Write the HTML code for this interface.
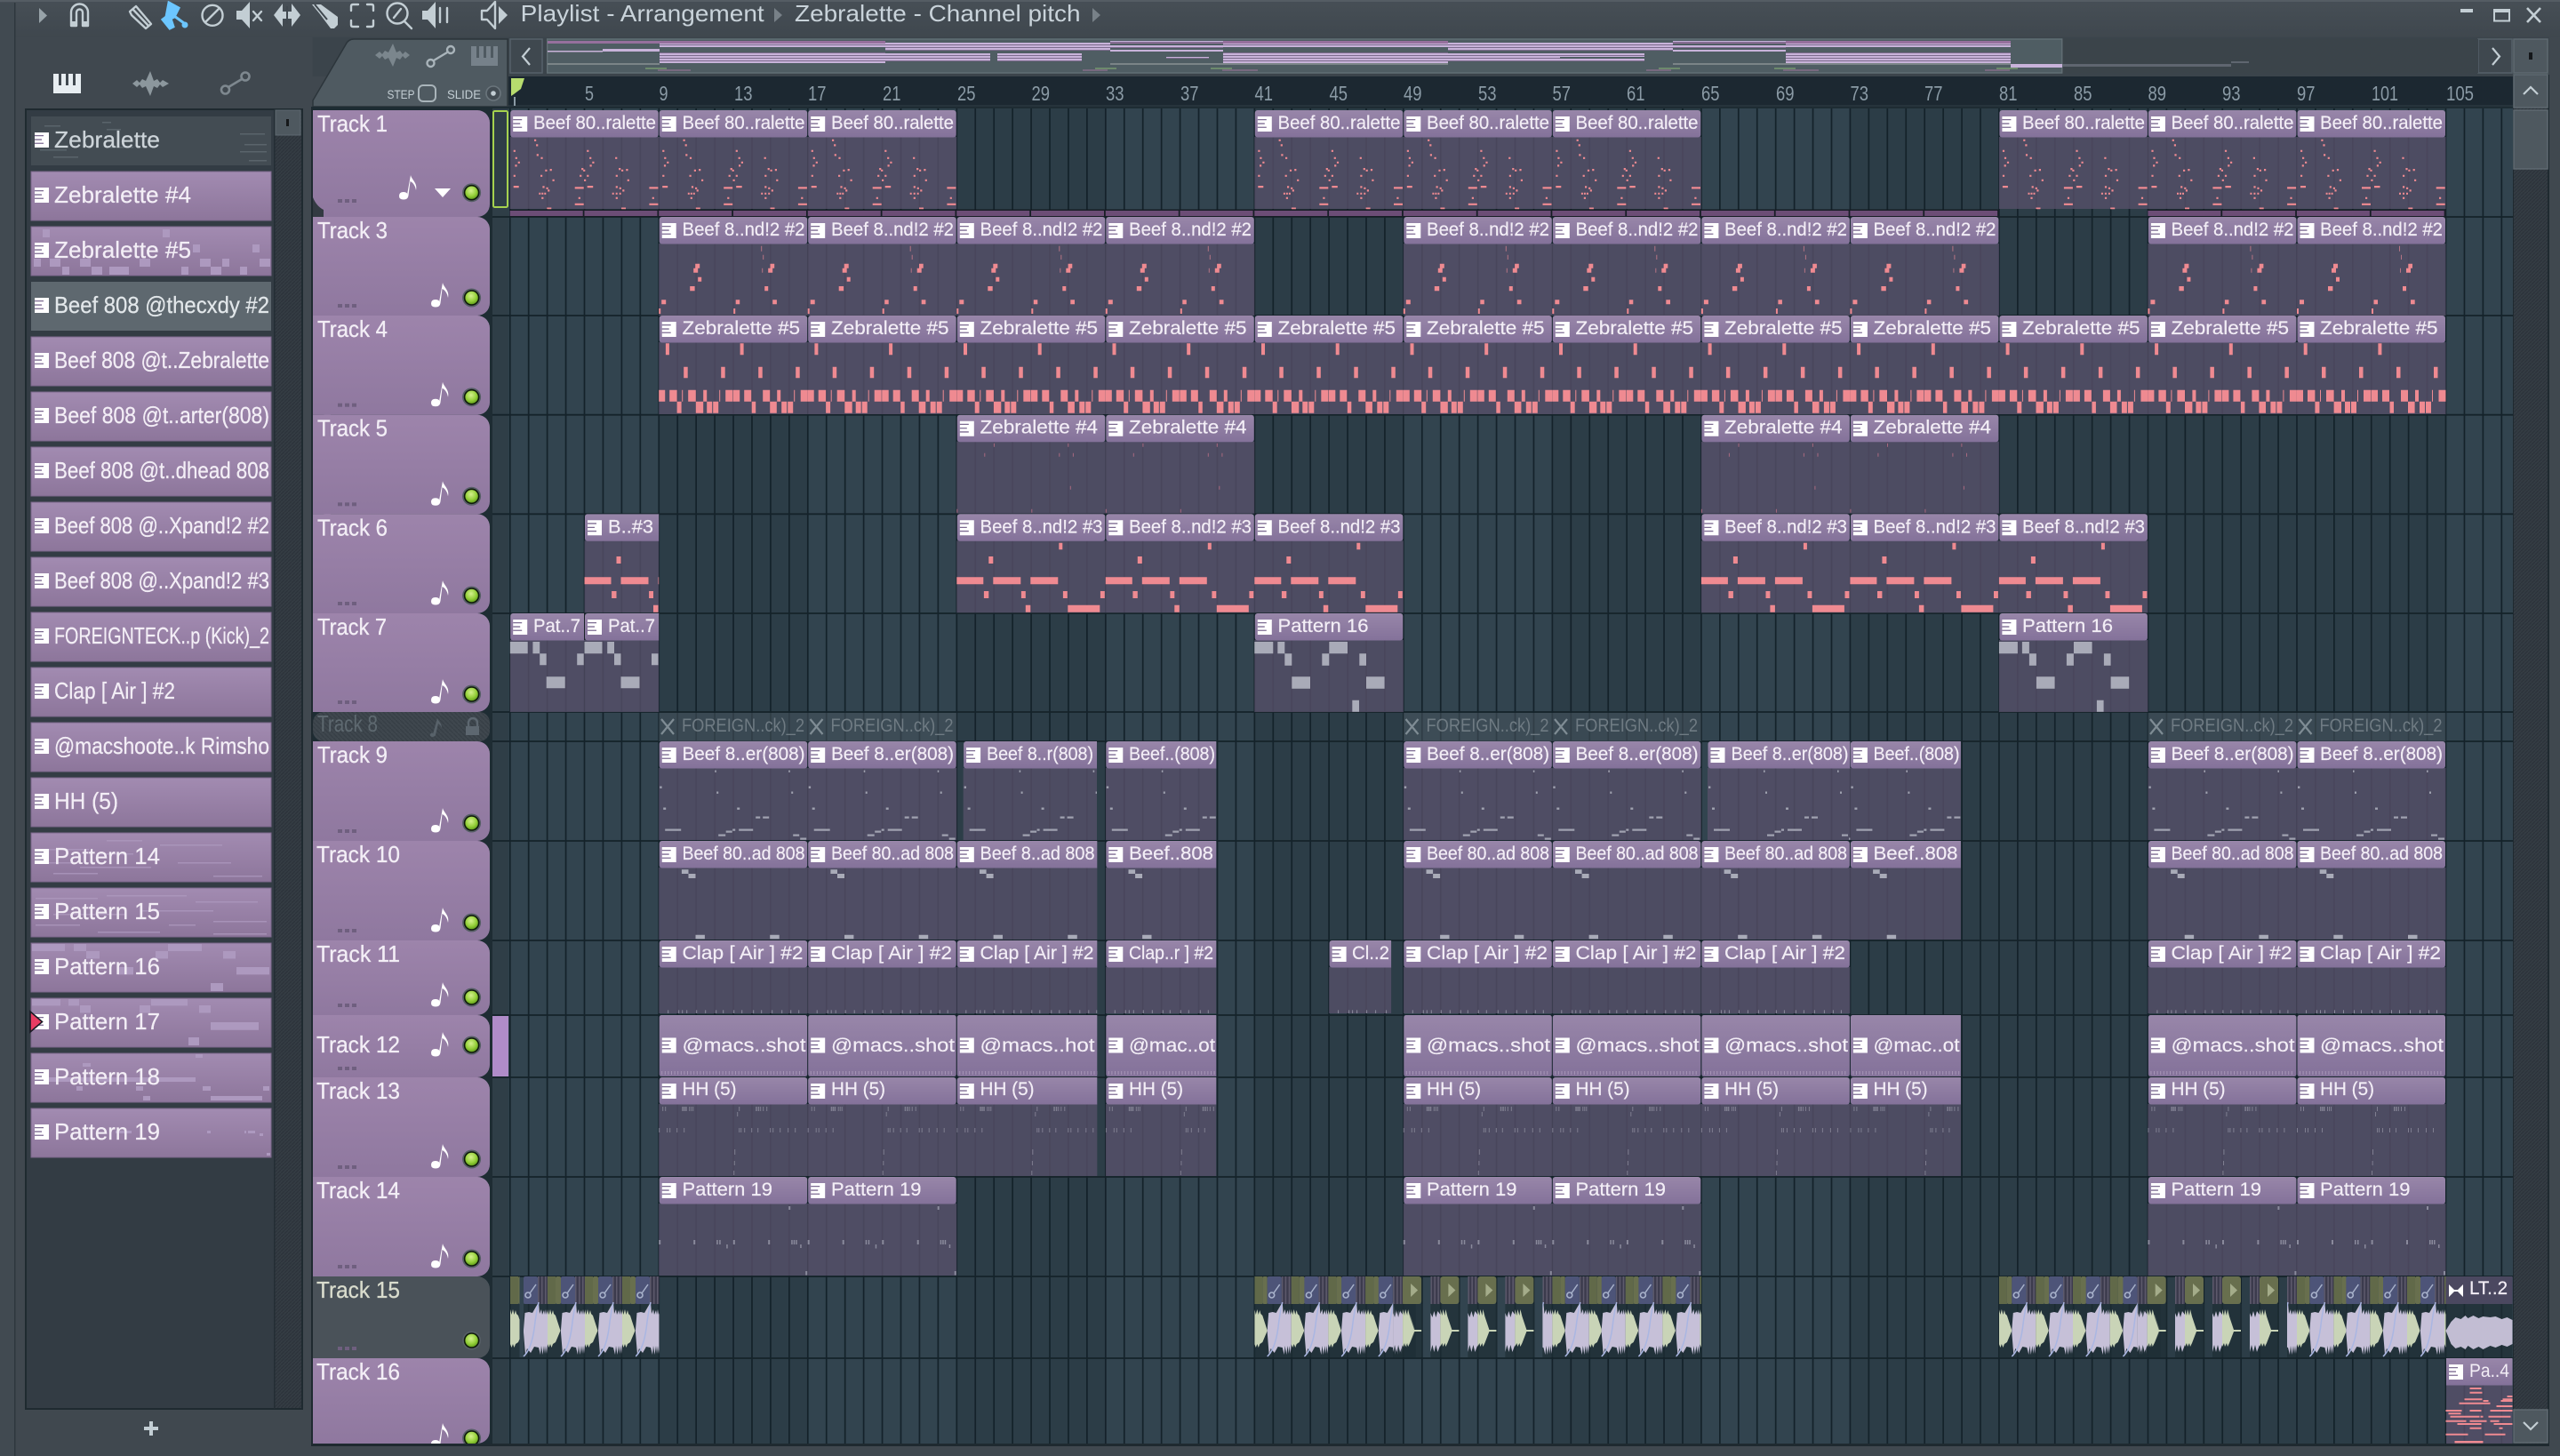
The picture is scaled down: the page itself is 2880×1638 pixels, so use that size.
<!DOCTYPE html>
<html><head><meta charset="utf-8"><title>Playlist - Arrangement</title>
<style>
html,body{margin:0;padding:0;background:#40484f;width:2880px;height:1638px;overflow:hidden}
svg{display:block}
text{font-family:"Liberation Sans",sans-serif}
.c text{font-size:21px;fill:#f3eef6;stroke:#f3eef6;stroke-width:.2}
.f text{font-size:21px;fill:#6f7b83}
.t{font-size:26px;fill:#f3eef6;stroke:#f3eef6;stroke-width:.3}
.l{font-size:26px;fill:#f3eef6;stroke:#f3eef6;stroke-width:.25}
.r{font-size:23px;fill:#8b9ba6}
.i{fill:none;stroke:#c3ced4;stroke-width:2.4;stroke-linejoin:round;stroke-linecap:round}
.s{fill:#c3ced4}
.d{fill:#5d5a74}
</style></head><body>
<svg xmlns="http://www.w3.org/2000/svg" width="2880" height="1638" viewBox="0 0 2880 1638">
<defs>
<linearGradient id="ch" x1="0" y1="0" x2="0" y2="1"><stop offset="0" stop-color="#9886a9"/><stop offset="1" stop-color="#84729a"/></linearGradient>
<linearGradient id="tr" x1="0" y1="0" x2="0" y2="1"><stop offset="0" stop-color="#9d84ab"/><stop offset="1" stop-color="#8f789f"/></linearGradient>
<linearGradient id="it" x1="0" y1="0" x2="0" y2="1"><stop offset="0" stop-color="#a28bb1"/><stop offset="1" stop-color="#8d769b"/></linearGradient>
<linearGradient id="top" x1="0" y1="0" x2="0" y2="1"><stop offset="0" stop-color="#474f56"/><stop offset="1" stop-color="#3f474e"/></linearGradient>
<radialGradient id="led" cx=".45" cy=".35" r=".7"><stop offset="0" stop-color="#d4f08e"/><stop offset=".6" stop-color="#95d03a"/><stop offset="1" stop-color="#5c9a18"/></radialGradient>
<pattern id="hat" width="4" height="4" patternUnits="userSpaceOnUse"><rect width="4" height="4" fill="#343c43"/><path d="M0 4L4 0" stroke="#2b3239" stroke-width="1.2"/></pattern>
<pattern id="hat2" width="5" height="5" patternUnits="userSpaceOnUse"><rect width="5" height="5" fill="#3f474e"/><path d="M0 0L5 5" stroke="#373f46" stroke-width="1.4"/></pattern>
<pattern id="ov" width="3" height="3" patternUnits="userSpaceOnUse"><rect width="3" height="2" fill="#c8b3da"/><rect y="2" width="3" height="1" fill="#7d6c8e"/></pattern>
<pattern id="st" width="4" height="4" patternUnits="userSpaceOnUse"><rect width="4" height="4" fill="#3c3b4d"/><rect width="1.5" height="4" fill="#5d5a6c"/></pattern>
<g id="pi"><path fill="#fff" d="M0 0h16v17H0z"/><path fill="#7d6b92" d="M0 3h10v1.3H0zM0 7.4h8v1.3H0zM0 11.6h10v1.3H0z"/></g>
<g id="C"><rect y="30" width="167.5" height="81" fill="#565069" fill-opacity=".8"/><rect x=".5" width="166.5" height="30.5" rx="3" fill="url(#ch)"/><use href="#pi" x="3.5" y="7"/></g>
<path id="nt" fill="#fff" d="M9 22L13 0C14 5 21 9 19 17 18 11 15 8 12.5 7L10.5 23Q10 27.5 5 27.5 0 27.5 0 23.5 0 19 5 19 7.5 19 9 20.5z"/>
<g id="ld"><circle r="10.5" fill="#565e66"/><circle r="8.8" fill="#0f1a0b"/><circle r="7.2" fill="url(#led)"/></g>
<g id="dt"><rect width="5" height="4" fill="#6f5f7f"/><rect x="8" width="5" height="4" fill="#6f5f7f"/><rect x="16" width="5" height="4" fill="#6f5f7f"/></g>
<g id="h"><use href="#nt" x="485" y="-37"/><use href="#ld" x="530.6" y="-20"/><use href="#dt" x="380" y="-13"/></g>

<g id="c1"><use href="#C"/><path fill="#ef8a91" d="M27.3 32.7h2.2v2.2h-2.2zM29.4 38.3h2.2v2.2h-2.2zM4 44.7h2.2v2.2H4zM30 49.3h2.2v2.2H30zM34.7 52.7h2.2v2.2h-2.2zM6 52.7h2.2v2.2H6zM9 57.7h2.2v2.2H9zM5.7 61.3h2.2v2.2H5.7zM86.5 44.7h2.2v2.2h-2.2zM89.4 52.7h2.2v2.2h-2.2zM92.6 57.7h2.2v2.2h-2.2zM89.8 61.3h2.2v2.2h-2.2zM118.4 52.7h2.2v2.2h-2.2zM39.6 66.7h2.2v2.2h-2.2zM44.9 66h2.2v2.2h-2.2zM122.4 65h2.2v2.2h-2.2zM125.3 66.7h2.2v2.2h-2.2zM130.6 66h2.2v2.2h-2.2zM80.4 65h2.2v2.2h-2.2zM82.4 66.7h2.2v2.2h-2.2zM34.3 72.7h2.2v2.2h-2.2zM47.8 77.7h2.2v2.2h-2.2zM4 72.7h2.2v2.2H4zM78.4 72.7h2.2v2.2h-2.2zM86.5 72.7h2.2v2.2h-2.2zM83.3 77.7h2.2v2.2h-2.2zM119 72.7h2.2v2.2H119zM132 77.7h2.2v2.2H132zM36.7 85.3h2.2v2.2h-2.2zM40.8 86.7H43v2.2h-2.2zM42.4 89.3h2.2v2.2h-2.2zM119 85.3h2.2v2.2H119zM123 86.7h2.2v2.2H123zM126.5 89.3h2.2v2.2h-2.2zM4 85h6v2.2H4zM87 85h6.5v2.2H87zM73 86.3h10v2.2H73zM156.7 86.3h10v2.2h-10zM32.6 92.7h2v2.2h-2zM35.6 92.7h2v2.2h-2zM38.6 92.7h2v2.2h-2zM115 92.7h2v2.2h-2zM119 92.7h2v2.2h-2zM123 92.7h2v2.2h-2zM35.5 97.7h2.2v2.2h-2.2zM119 97.7h2.2v2.2H119zM77 97.7h2.2v2.2H77zM160 97.7h2.2v2.2H160zM73 104.7h10v2.2H73zM156.7 104.7h10v2.2h-10zM41.6 109.5h5v1.8h-5zM125.3 109.5h5v1.8h-5z"/></g>
<g id="c3"><use href="#C"/><path fill="#ef8a91" d="M41 52.7h5v5h-5zM39 57.7h5v5h-5zM44 67.7h4v5h-4zM35 78h5.4v5.3H35zM3 93.3h5v5H3zM86.5 93.3h4.5v5h-4.5zM128 93.3h4.7v5H128zM0 103h2v6H0zM84 103h2v6h-2zM125.3 52.7h4.7v5h-4.7zM123 57.7h5v5h-5zM119 78h4v5.3h-4z"/><path fill="#b57484" d="M115 32.7h1v6h-1zM117 42.7h1V48h-1zM116 57.7h1v5h-1z"/></g>
<g id="c4"><use href="#C"/><path fill="#ef8a91" d="M7.7 31.3h4v13h-4zM91.4 31.3h4v13h-4zM28 57.7h4.5v12.6H28zM70 57.7h4.5v12.6H70zM112 57.7h4.5v12.6H112zM154 57.7h4.5v12.6H154zM0 83.7h7v13H0zM12 83.7h8.4v13H12zM26 83.7h1v13h-1zM33 83.7h8.6v13H33zM50 83.7h4v13h-4zM68 83.7h1v13h-1zM75 83.7h8v13h-8zM83.500 83.700h7.500v13h-7.500zM96 83.7h8v13h-8zM117 83.7h8v13h-8zM133 83.7h4v13h-4zM152 83.7h1v13h-1zM159.500 83.700h8v13h-8zM20.4 96.7h5v13h-5zM41.6 96.7H50v13h-8.4zM54 96.7h6v13h-6zM61 96.7h6v13h-6zM104.5 96.7h4.5v13h-4.5zM125 96.7h7.6v13H125zM138 96.7h6v13h-6zM145 96.7h6v13h-6z"/></g>
<g id="c5"><use href="#C"/><path fill="#a8697f" d="M41.6 32h1v4h-1zM125 32h1v4h-1zM31 43h1v4h-1zM115 43h1v4h-1zM130.6 43h1v4h-1zM127.5 80h1v4h-1zM0 106h1v4H0zM84 106h1v4h-1z"/></g>
<g id="c6"><use href="#C"/><path fill="#ef8a91" d="M115 32.4h4V40h-4zM36 47.7h5v8h-5zM0 71h30v8H0zM41 71h31v8H41zM83 71h31v8H83zM30.6 86.7H36v8h-5.4zM72.6 86.7h4.9v8h-4.9zM119.6 86.7h4.9v8h-4.9zM161.6 86.7h4.9v8h-4.9zM77.5 102.4H83v8h-5.5zM125 102.4h36v8h-36z"/></g>
<g id="c7"><use href="#C"/><path fill="#a9abb8" d="M0 32h21v13.3H0zM26 32h8v13.3h-8zM34 45.3h8v13.4h-8zM42 71.3h20.7v13.4H42zM76 45.3h8v13.4h-8zM84 32h20.7v13.3H84zM110 97.7h7.7v13H110zM118 45.3h7.7v13.4H118zM125.7 71.3h20.6v13.4h-20.6z"/></g>
<g id="c7a"><use href="#C"/><path fill="#a9abb8" d="M0 32h20v13.3H0zM25.7 32h7.8v13.3h-7.8zM33.5 45.3H41v13H33.5zM75.5 45.3H83v13h-7.5zM41 71.3h21v13H41z"/></g>
<g id="c9"><use href="#C"/><path fill="#a0a2b0" d="M63 32.5h1.6v2.4H63zM146 32.5h1.6v2.4H146zM1 50.5h2.4v2.4H1zM65 56.5h2v2.4h-2zM149 56.5h2v2.4h-2zM5 74.5h3v2.4H5zM88 74.5h3v2.4h-3zM7 98.5h18v2.2H7zM90 98.5h16v2.2H90zM109 84.5h5v2.2h-5zM117 84.5h7v2.2h-7zM67 104.5h8v2.2h-8zM75.5 100.5h7v2.2h-7zM83 98.5h3v2.2h-3zM151 104.5h7v2.2h-7zM159 108.5h7v2.2h-7z"/></g>
<g id="c10"><use href="#C"/><path fill="#a9abb8" d="M25.7 32.3h7.6V37h-7.6zM33.3 37h8v5h-8zM41.3 105.7h10.4v4.6H41.3zM125 105.7h10.5v4.6H125z"/></g>
<g id="c11"><use href="#C"/><path fill="#8a8a9c" d="M10 78.4h1V82h-1zM22 78.4h1V82h-1zM26 78.4h1V82h-1zM31 78.4h1V82h-1zM42 78.4h1V82h-1zM52 78.4h1V82h-1zM64 78.4h1V82h-1zM72 78.4h1V82h-1zM84 78.4h1V82h-1zM93 78.4h1V82h-1zM106 78.4h1V82h-1zM115 78.4h1V82h-1zM127 78.4h1V82h-1zM138 78.4h1V82h-1zM148 78.4h1V82h-1zM157 78.4h1V82h-1z"/></g>
<g id="c12"><rect x=".5" width="166.5" height="69" rx="2.5" fill="url(#ch)"/><use href="#pi" x="3.5" y="25.5"/><path stroke="#a796b7" stroke-width="4" stroke-dasharray="1 2.6" d="M3 65h161" fill="none"/></g>
<g id="c13"><use href="#C"/><path fill="#7f7e90" d="M4 33h1v5H4zM7 33h1v5H7zM26 33h1.5v5H26zM28 33h1.5v5H28zM30 33h1.5v5H30zM34 33h1v5h-1zM36 33h1v5h-1zM38 33h1v5h-1zM90 33h1v5h-1zM109 33h1.5v5H109zM111.500 33h1.500v5H111.500zM114 33h1v5h-1zM117 33h1v5h-1zM121 33h1v5h-1zM0 57h1v5H0zM9 57h1v5H9zM12 57h1v5h-1zM20 57h1v5h-1zM28 57h1v5h-1zM90 57h1v5h-1zM92 57h1v5h-1zM96 57h1v5h-1zM104 57h1v5h-1zM111 57h1v5h-1zM125 57h1v5h-1zM128 57h1v5h-1zM136 57h1v5h-1zM145 57h1v5h-1zM153 57h1v5h-1zM88 39h1v5h-1zM85 81h1v6h-1zM84.600 94h1v5h-1zM84 105h1v5h-1z"/></g>
<g id="c14"><use href="#C"/><path fill="#8a8a9c" d="M0 71h2v5H0zM39 71h2v5h-2zM65 71h1.500v5H65zM68 71h1.500v5H68zM83.600 71h2v5h-2zM123 71h2v5h-2zM149 71h1.500v5H149zM151.500 71h1.500v5h-1.500zM154 71h1.500v5H154zM76 76h1.500v4.500H76zM146 33h2v4h-2zM159 76h1.500v4H159zM165 106h2v4.500h-2z"/></g>

<g id="au">
<rect y="31" width="42" height="60" fill="#1e2d34" fill-opacity=".7"/>
<rect x="16" width="11" height="31" fill="url(#st)"/>
<rect x="27" width="9" height="31" fill="#616949"/><rect x="36" width="6" height="31" rx="2" fill="#686f4e"/>
<rect width="16" height="31" rx="2" fill="#4d5478"/>
<circle cx="5" cy="21" r="3" fill="none" stroke="#a8b2cb" stroke-width="1.6"/><path d="M7 19L14 9" stroke="#a8b2cb" stroke-width="1.5"/>
<g transform="translate(0,61)"><path fill="#c6c0d8" d="M0-1L1.500-20 6-21 10-20 14-27 17-32 18-19 20-24 21-18 23-23 24-18 25-24 26-18 27-22V16L26 26 25 17 24 26 23 17 21.500 27 20 17 19 27 17 19 12 18 8 25 4 20 2 27 0 2z"/><path fill="#c9d4b7" d="M27-24L28.500-18 30-24 31.500-18 33-23 34-19 36-17 41.500 0 36 13 33 15 31.500 19 30 15 28.500 19 27 15z"/><path d="M0 29Q10 20 13-10 15-24 17-32" fill="none" stroke="#aab6e2" stroke-width="1.5"/></g>
</g>
<g id="sm">
<rect y="31" width="33" height="60" fill="#1e2d34" fill-opacity=".7"/>
<rect width="11" height="31" fill="url(#st)"/><rect x="11" width="21" height="31" rx="3" fill="#686f4e"/><path d="M20 8L28 15.500 20 23z" fill="#a4ac8a"/>
<g transform="translate(0,61)"><path fill="#c6c0d8" d="M0-20L2-15 4-22 6-15 8-22 11-18V16L8 24 6 16 4 24 2 16 0 24z"/><path fill="#c9d4b7" d="M11-24L13-17 14-24 16-17 17-24 19-16 24-1 32-1V1H24L19 14 17 18 16 14 14 18 13 14 11 18z"/></g>
</g>
<g id="sec">
<svg x="0" width="14.400" height="91"><use href="#au" x="-27"/></svg>
<use href="#au" x="14.400"/><use href="#au" x="56.100"/><use href="#au" x="97.800"/><use href="#au" x="139.500"/>
<use href="#sm" x="155.800"/><use href="#sm" x="198.100"/><use href="#sm" x="240.100"/><use href="#sm" x="282.100"/>
<svg x="324.100" width="25.300" height="91"><use href="#au" x="-16"/></svg>
<use href="#au" x="349.500"/><use href="#au" x="390.400"/><use href="#au" x="432.100"/>
<svg x="474.100" width="28.500" height="91"><use href="#au"/></svg>
</g>
<clipPath id="t16"><rect x="352" y="1528" width="200" height="96"/></clipPath>
<clipPath id="gc"><rect x="572" y="122" width="2255" height="1502"/></clipPath>
</defs>

<!-- chrome -->
<rect width="2880" height="1638" fill="#40484f"/>
<rect width="2880" height="42" fill="url(#top)"/>
<rect y="0" width="2880" height="2" fill="#555d64"/>
<rect x="0" y="3" width="16" height="1635" fill="#414a51"/><rect x="16" y="3" width="1.500" height="1635" fill="#2e373d"/>

<!-- toolbar icons -->
<path d="M44 9L53 17.500 44 26z" fill="#98a3a9"/>
<path d="M80 29V14a9.500 9.500 0 0 1 19 0v15h-6V14a3.500 3.500 0 0 0-7 0v15z" class="i"/><path d="M80 24h6v6h-6zM93 24h6v6h-6z" class="s"/>
<path d="M146 13l7-6 17 20-6 5-16-15zM150 11l17 18" class="i"/>
<path d="M190 3l11 6-5 10-4 2 3 9-4 2-8-10 4-3zM196 18l11 8" fill="#6cc6ff" stroke="#6cc6ff" stroke-width="3"/><circle cx="208" cy="28" r="3.500" fill="#6cc6ff"/>
<circle cx="239" cy="17.300" r="11.500" class="i"/><path d="M231 25L247 9" class="i"/>
<path d="M266 12h6l9-10v30l-9-10h-6z" class="s"/><path d="M285 13l9 10M294 13l-9 10" class="i"/>
<path d="M308 17l10-13v26zM338 17l-10-13v26zM318 13h10v8h-10z" class="s"/><path d="M323 7v20" stroke="#40484f" stroke-width="2"/>
<path d="M351 5h10l19 14v9l-4 4h-4l-12-16z" class="s"/><path d="M354 5l14 17" stroke="#3f474e" stroke-width="2" fill="none"/>
<path d="M395 12V7q0-2 2-2h6M413 5h5q2 0 2 2v5M420 23v5q0 2-2 2h-5M403 30h-6q-2 0-2-2v-5" class="i" stroke-width="3"/>
<circle cx="447" cy="15" r="11.500" class="i"/><path d="M455 24l8 8" class="i" stroke-width="4"/><path d="M443 20l8-10" class="i"/>
<path d="M475 12h6l9-10v30l-9-10h-6z" class="s"/><path d="M495 9v16M503 9v16" class="i" stroke-width="3"/>
<path d="M542 12h6l9-10v30l-9-10h-6z" class="i"/><path d="M561 7l10 10-10 10z" class="s"/>
<text x="585.700" y="24" font-size="26" fill="#c9d3da" textLength="274" lengthAdjust="spacingAndGlyphs">Playlist - Arrangement</text>
<path d="M871 9l9 8-9 8z" fill="#788188"/>
<text x="894" y="24" font-size="26" fill="#c9d3da" textLength="321.500" lengthAdjust="spacingAndGlyphs">Zebralette - Channel pitch</text>
<path d="M1229 9l9 8-9 8z" fill="#788188"/>
<rect x="2768" y="10" width="14" height="4" fill="#c3ced4"/>
<path d="M2806 11.500h17v12h-17z" fill="none" stroke="#c3ced4" stroke-width="2"/><rect x="2805" y="10" width="19" height="4" fill="#c3ced4"/>
<path d="M2843 9l15 16M2858 9l-15 16" stroke="#c3ced4" stroke-width="2.600"/>

<!-- top band -->
<rect x="340" y="42" width="2540" height="44" fill="#3b444b"/>
<rect x="17.500" y="42" width="334" height="1596" fill="#40484f"/>

<!-- left picker header icons -->
<rect x="60" y="83" width="31" height="22" fill="#e7edf1"/><path d="M66 83h3v13h-3zM74 83h3v13h-3zM82 83h3v13h-3z" fill="#40484f"/>
<path id="wv" d="M149 94l5-4 3 3 3-4 4 2 5-11 4 11 4-2 3 4 3-3 7 4-7 4-3-3-3 4-4-2-4 11-5-11-4 2-3-4-3 3z" fill="#8c979d"/>
<circle cx="253.500" cy="101" r="4.500" fill="none" stroke="#7e888f" stroke-width="2.600"/><circle cx="276" cy="86" r="4.500" fill="none" stroke="#7e888f" stroke-width="2.600"/><path d="M257 98L272 89" stroke="#7e888f" stroke-width="2.600"/>

<!-- picker panel -->
<rect x="29" y="123" width="311" height="1462" fill="#333c44" stroke="#1f2a30" stroke-width="2"/>
<rect x="309" y="124" width="30" height="1460" fill="url(#hat)"/>
<rect x="308" y="123" width="1.500" height="1462" fill="#242e35"/>
<rect x="310" y="124" width="28" height="28" fill="#4e585f" stroke="#5e6970"/><rect x="322" y="134" width="3" height="8" fill="#16181a"/>
<rect x="35" y="131" width="270" height="55" fill="#434c53"/>
<path fill="#5a646b" d="M45 168h30v1.500H45zM60 176h28v1.500H60zM120 165h30v1.500h-30zM270 150h28v1.500h-28zM275 162h25v1.500h-25zM270 170h30v1.500h-30zM280 180h20v1.500h-20zM50 141h18v1.500H50zM115 137h10v1.500h-10zM120 145h16v1.500h-16z"/>
<rect x="35" y="193" width="270" height="55" fill="url(#it)" stroke="#7c688d"/>
<rect x="35" y="255" width="270" height="55" fill="url(#it)" stroke="#7c688d"/>
<path fill="#ad99bf" d="M48 258h8v9h-8zM183 258h8v9h-8zM217 275h8v9h-8zM284 275h8v9h-8zM56 291h12v9H56zM90 291h12v9H90zM157 291h12v9h-12zM225 291h12v9h-12zM250 291h8v9h-8zM292 291h12v9h-12zM70 300h8v9h-8zM103 300h12v9h-12zM123 300h22v9h-22zM204 300h8v9h-8zM237 300h12v9h-12zM270 300h8v9h-8zM38 291h8v9h-8z"/>
<rect x="35" y="317" width="270" height="55" fill="#5e686f"/>
<g fill="url(#it)" stroke="#7c688d"><rect x="35" y="379" width="270" height="55"/><rect x="35" y="441" width="270" height="55"/><rect x="35" y="503" width="270" height="55"/><rect x="35" y="565" width="270" height="55"/><rect x="35" y="627" width="270" height="55"/><rect x="35" y="689" width="270" height="55"/><rect x="35" y="751" width="270" height="55"/><rect x="35" y="813" width="270" height="55"/><rect x="35" y="875" width="270" height="55"/><rect x="35" y="937" width="270" height="55"/><rect x="35" y="999" width="270" height="55"/><rect x="35" y="1061" width="270" height="55"/><rect x="35" y="1123" width="270" height="55"/><rect x="35" y="1185" width="270" height="55"/><rect x="35" y="1247" width="270" height="55"/></g>
<path fill="#ad99bf" d="M36 1062h37v8H36zM83 1062h14v8H83zM97 1070h15v8.500H97zM175 1070h14v8.500h-14zM189 1062h38v8h-38zM251 1070h14v8.500h-14zM266 1088h37v8.400h-37zM237 1106h14v9h-14zM133 1088h17v8.400h-17zM36 1124h32v7.400H36zM77 1124h12v7.400H77zM90 1131h12v8.500H90zM157 1131h12v8.500h-12zM170 1124h41v7.400h-41zM224 1131h13v8.500h-13zM237 1150h54v8.700h-54zM212 1167h12v9h-12zM220 1186h8v4h-8zM93 1196h9v4h-9zM50 1212h170v5H50zM86 1222h7v5h-7zM153 1222h8v5h-8zM228 1222h9v5h-9zM296 1222h7v5h-7zM161 1233h8v5h-8zM237 1233h58v5h-58zM233 1272h4v3h-4zM275 1272h2v3h-2zM279 1272h8v3h-8zM292 1275h4v3h-4zM300 1297h4v3h-4zM130 1272h18v3h-18z"/>
<path fill="#ad99bf" fill-opacity=".75" d="M40 955h60v1.500H40zM110 960h40v1.500h-40zM180 950h70v1.500h-70zM90 975h80v1.500H90zM200 970h60v1.500h-60zM40 970h40v1.500H40zM240 985h55v1.500h-55zM60 982h50v1.500H60zM120 945h40v1.500h-40zM40 1010h70v1.500H40zM120 1007h90v1.500h-90zM220 1014h70v1.500h-70zM60 1028h80v1.500H60zM160 1024h80v1.500h-80zM40 1040h50v1.500H40zM240 1036h60v1.500h-60zM110 1048h70v1.500h-70zM240 1050h60v1.500h-60zM190 1040h30v1.500h-30z"/>
<g id="lp"><use href="#pi" x="39" y="149"/><use href="#pi" x="39" y="211"/><use href="#pi" x="39" y="273"/><use href="#pi" x="39" y="335"/><use href="#pi" x="39" y="397"/><use href="#pi" x="39" y="459"/><use href="#pi" x="39" y="521"/><use href="#pi" x="39" y="583"/><use href="#pi" x="39" y="645"/><use href="#pi" x="39" y="707"/><use href="#pi" x="39" y="769"/><use href="#pi" x="39" y="831"/><use href="#pi" x="39" y="893"/><use href="#pi" x="39" y="955"/><use href="#pi" x="39" y="1017"/><use href="#pi" x="39" y="1079"/><use href="#pi" x="39" y="1141"/><use href="#pi" x="39" y="1203"/><use href="#pi" x="39" y="1265"/></g>
<g>
<text class="l" x="61" y="166" style="fill:#cdd4d9;stroke:#cdd4d9" textLength="119" lengthAdjust="spacingAndGlyphs">Zebralette</text>
<text class="l" x="61" y="228" textLength="154" lengthAdjust="spacingAndGlyphs">Zebralette #4</text>
<text class="l" x="61" y="290" textLength="154" lengthAdjust="spacingAndGlyphs">Zebralette #5</text>
<text class="l" x="61" y="352" style="fill:#e2e7ea;stroke:#e2e7ea" textLength="242" lengthAdjust="spacingAndGlyphs">Beef 808 @thecxdy #2</text>
<text class="l" x="61" y="414" textLength="242" lengthAdjust="spacingAndGlyphs">Beef 808 @t..Zebralette</text>
<text class="l" x="61" y="476" textLength="242" lengthAdjust="spacingAndGlyphs">Beef 808 @t..arter(808)</text>
<text class="l" x="61" y="538" textLength="242" lengthAdjust="spacingAndGlyphs">Beef 808 @t..dhead 808</text>
<text class="l" x="61" y="600" textLength="242" lengthAdjust="spacingAndGlyphs">Beef 808 @..Xpand!2 #2</text>
<text class="l" x="61" y="662" textLength="242" lengthAdjust="spacingAndGlyphs">Beef 808 @..Xpand!2 #3</text>
<text class="l" x="61" y="724" textLength="242" lengthAdjust="spacingAndGlyphs">FOREIGNTECK..p (Kick)_2</text>
<text class="l" x="61" y="786" textLength="136" lengthAdjust="spacingAndGlyphs">Clap [ Air ] #2</text>
<text class="l" x="61" y="848" textLength="242" lengthAdjust="spacingAndGlyphs">@macshoote..k Rimsho</text>
<text class="l" x="61" y="910" textLength="72" lengthAdjust="spacingAndGlyphs">HH (5)</text>
<text class="l" x="61" y="972" textLength="119" lengthAdjust="spacingAndGlyphs">Pattern 14</text>
<text class="l" x="61" y="1034" textLength="119" lengthAdjust="spacingAndGlyphs">Pattern 15</text>
<text class="l" x="61" y="1096" textLength="119" lengthAdjust="spacingAndGlyphs">Pattern 16</text>
<text class="l" x="61" y="1158" textLength="119" lengthAdjust="spacingAndGlyphs">Pattern 17</text>
<text class="l" x="61" y="1220" textLength="119" lengthAdjust="spacingAndGlyphs">Pattern 18</text>
<text class="l" x="61" y="1282" textLength="119" lengthAdjust="spacingAndGlyphs">Pattern 19</text>
</g>
<path d="M34 1138L47.500 1149.500 34 1161z" fill="#e83c62" stroke="#1a1a24" stroke-width="1.600"/>
<path d="M162 1605h16v4h-16zM168 1599h4v16h-4z" fill="#c3ced4"/>

<!-- tool panel -->
<path d="M352 120V113L389 50Q392 44 398 44H571V120z" fill="#4f5a61" stroke="#2c353b" stroke-width="1.500"/>
<path d="M422 62l5-4 3 3 3-4 4 2 5-10 4 10 4-2 3 4 3-3 5 4-5 4-3-3-3 4-4-2-4 10-5-10-4 2-3-4-3 3z" fill="#7b868d"/>
<circle cx="484.500" cy="71" r="4" fill="none" stroke="#a9b4ba" stroke-width="2.400"/><circle cx="507" cy="56" r="4" fill="none" stroke="#a9b4ba" stroke-width="2.400"/><path d="M488 68L503 59" stroke="#a9b4ba" stroke-width="2.400"/>
<rect x="530" y="52" width="30" height="22" fill="#76818a"/><path d="M536 52h3v13h-3zM544 52h3v13h-3zM552 52h3v13h-3z" fill="#4f5a61"/>
<text x="435.500" y="111" font-size="13.500" fill="#c3ced4" textLength="31" lengthAdjust="spacingAndGlyphs">STEP</text>
<rect x="471" y="96" width="19" height="18" rx="5" fill="none" stroke="#a9b4ba" stroke-width="2"/>
<text x="503" y="111" font-size="13.500" fill="#c3ced4" textLength="38" lengthAdjust="spacingAndGlyphs">SLIDE</text>
<circle cx="555" cy="105" r="8" fill="#434c53" stroke="#6a757c" stroke-width="1.600"/><circle cx="555" cy="105" r="2.800" fill="#c3ced4"/>

<!-- buttons -->
<rect x="574" y="44" width="36" height="38" fill="#3f484f" stroke="#56616a" stroke-width="1.500"/><path d="M596 54l-8 9.500 8 9.500" fill="none" stroke="#c3ced4" stroke-width="2.200"/>
<rect x="2788" y="44" width="38" height="38" fill="#3f484f" stroke="#56616a" stroke-width="1.500"/><path d="M2804 54l8 9.500-8 9.500" fill="none" stroke="#c3ced4" stroke-width="2.200"/>
<rect x="2828" y="44" width="38" height="38" fill="#4e585f" stroke="#5e6970" stroke-width="1.500"/><rect x="2845" y="59" width="4" height="8" fill="#14171a"/>

<!-- overview -->
<rect x="614" y="44" width="2174" height="38" fill="#3b444a"/>
<rect x="615.700" y="44" width="1704" height="38" fill="#4f5d63" stroke="#616e74" stroke-width="1.500"/>
<g>
<path fill="#96709d" d="M616 46h380v3H616zM1249 46h380v3h-380zM1882 46h380v3h-380z"/>
<g fill="url(#ov)"><path d="M742 49h507v4H742zM742 59h254v12H742zM996 48h253v9H996zM996 60h118v9H996zM1122 60h95v9h-95zM1249 46h127v2h-127zM1249 51h127v3h-127zM1376 49h253v4h-253zM1376 59h253v12h-253zM1629 48h253v9h-253zM1629 60h126v9h-126zM1755 60h95v4h-95zM1755 66h95v3h-95zM1882 46h127v2h-127zM1882 51h127v3h-127zM2009 49h253v4h-253zM2009 59h253v12h-253zM1312 64h48v2h-48z"/></g>
<path fill="#c8b3da" d="M616 57h62v1.500h-62zM678 55h64v3h-64zM1249 56h127v2h-127zM1882 56h127v2h-127zM2262 72h58v4h-58z"/>
<path fill="#7b8487" d="M616 71h126v2H616zM1249 71h380v2h-380zM1882 71h380v2h-380z"/>
<path fill="#6d8a6d" d="M726 76h24v2h-24zM1232 76h24v2h-24zM1362 76h24v2h-24zM1866 76h24v2h-24zM1996 76h24v2h-24zM2246 76h24v2h-24z"/>
<path fill="#77697f" d="M740 78h37v2h-37zM1218 78h28v2h-28zM1375 78h40v2h-40zM1852 78h28v2h-28zM2006 78h40v2h-40zM2233 78h28v2h-28z"/>
<path fill="#5f6670" d="M2320 72h190v3h-190zM2510 69h20v2h-20z"/>
</g>

<!-- ruler -->
<rect x="572" y="86" width="2255" height="36" fill="#1c2831"/>
<rect x="572" y="118" width="2255" height="4" fill="#26333b"/>
<path d="M579 109v10" stroke="#8b9ba6" stroke-width="2"/>
<path d="M575 88h15l-4 12-8 6-3 2z" fill="#b7dc6e"/>
<g>
<text class="r" x="658" y="113" textLength="10" lengthAdjust="spacingAndGlyphs">5</text>
<text class="r" x="741.500" y="113" textLength="10" lengthAdjust="spacingAndGlyphs">9</text>
<text class="r" x="826" y="113" textLength="20.500" lengthAdjust="spacingAndGlyphs">13</text>
<text class="r" x="909" y="113" textLength="20.500" lengthAdjust="spacingAndGlyphs">17</text>
<text class="r" x="993" y="113" textLength="20.500" lengthAdjust="spacingAndGlyphs">21</text>
<text class="r" x="1077" y="113" textLength="20.500" lengthAdjust="spacingAndGlyphs">25</text>
<text class="r" x="1160.500" y="113" textLength="20.500" lengthAdjust="spacingAndGlyphs">29</text>
<text class="r" x="1244" y="113" textLength="20.500" lengthAdjust="spacingAndGlyphs">33</text>
<text class="r" x="1328" y="113" textLength="20.500" lengthAdjust="spacingAndGlyphs">37</text>
<text class="r" x="1411.500" y="113" textLength="20.500" lengthAdjust="spacingAndGlyphs">41</text>
<text class="r" x="1495.500" y="113" textLength="20.500" lengthAdjust="spacingAndGlyphs">45</text>
<text class="r" x="1579" y="113" textLength="20.500" lengthAdjust="spacingAndGlyphs">49</text>
<text class="r" x="1663" y="113" textLength="20.500" lengthAdjust="spacingAndGlyphs">53</text>
<text class="r" x="1746.500" y="113" textLength="20.500" lengthAdjust="spacingAndGlyphs">57</text>
<text class="r" x="1830" y="113" textLength="20.500" lengthAdjust="spacingAndGlyphs">61</text>
<text class="r" x="1914" y="113" textLength="20.500" lengthAdjust="spacingAndGlyphs">65</text>
<text class="r" x="1998" y="113" textLength="20.500" lengthAdjust="spacingAndGlyphs">69</text>
<text class="r" x="2081.500" y="113" textLength="20.500" lengthAdjust="spacingAndGlyphs">73</text>
<text class="r" x="2165" y="113" textLength="20.500" lengthAdjust="spacingAndGlyphs">77</text>
<text class="r" x="2249" y="113" textLength="20.500" lengthAdjust="spacingAndGlyphs">81</text>
<text class="r" x="2333" y="113" textLength="20.500" lengthAdjust="spacingAndGlyphs">85</text>
<text class="r" x="2416.500" y="113" textLength="20.500" lengthAdjust="spacingAndGlyphs">89</text>
<text class="r" x="2500" y="113" textLength="20.500" lengthAdjust="spacingAndGlyphs">93</text>
<text class="r" x="2584" y="113" textLength="20.500" lengthAdjust="spacingAndGlyphs">97</text>
<text class="r" x="2668" y="113" textLength="30" lengthAdjust="spacingAndGlyphs">101</text>
<text class="r" x="2752" y="113" textLength="31" lengthAdjust="spacingAndGlyphs">105</text>
</g>

<!-- track panel backing -->
<rect x="350" y="120" width="2477" height="1507" fill="#1e2c33"/>
<rect x="554" y="122" width="18" height="1502" fill="#2f3e47"/>
<!-- grid -->
<rect x="572" y="122" width="2255" height="1502" fill="#2c3d47"/>
<path fill="#32444f" d="M572 122h169v1502H572zM909 122h167v1502H909zM1244 122h167v1502h-167zM1579 122h167v1502h-167zM1914 122h167v1502h-167zM2751 122h76v1502h-76z"/>
<line x1="572.900" y1="873" x2="2827" y2="873" stroke="#14222a" stroke-width="1502" stroke-dasharray="1.700 19.240"/>
<path stroke="#15232a" stroke-width="1.800" fill="none" d="M554 244H2827M554 355H2827M554 466.700H2827M554 578.300H2827M554 690H2827M554 801H2827M554 834H2827M554 946H2827M554 1058H2827M554 1142H2827M554 1212H2827M554 1324H2827M554 1436H2827M554 1528H2827"/>

<!-- track headers -->
<g fill="url(#tr)">
<rect x="352" y="124" width="199" height="120" rx="14"/><rect x="352" y="124" width="20" height="120"/>
<rect x="352" y="244" width="199" height="111" rx="14"/><rect x="352" y="244" width="20" height="111"/>
<rect x="352" y="355" width="199" height="111.700" rx="14"/><rect x="352" y="355" width="20" height="111.700"/>
<rect x="352" y="466.700" width="199" height="111.600" rx="14"/><rect x="352" y="466.700" width="20" height="111.600"/>
<rect x="352" y="578.300" width="199" height="111.700" rx="14"/><rect x="352" y="578.300" width="20" height="111.700"/>
<rect x="352" y="690" width="199" height="111" rx="14"/><rect x="352" y="690" width="20" height="111"/>
<rect x="352" y="834" width="199" height="112" rx="14"/><rect x="352" y="834" width="20" height="112"/>
<rect x="352" y="946" width="199" height="112" rx="14"/><rect x="352" y="946" width="20" height="112"/>
<rect x="352" y="1058" width="199" height="84" rx="14"/><rect x="352" y="1058" width="20" height="84"/>
<rect x="352" y="1142" width="199" height="70" rx="14"/><rect x="352" y="1142" width="20" height="70"/>
<rect x="352" y="1212" width="199" height="112" rx="14"/><rect x="352" y="1212" width="20" height="112"/>
<rect x="352" y="1324" width="199" height="112" rx="14"/><rect x="352" y="1324" width="20" height="112"/>
<rect x="352" y="1528" width="199" height="96" rx="14"/><rect x="352" y="1528" width="20" height="96"/>
</g>
<rect x="352" y="801" width="199" height="33" rx="12" fill="url(#hat2)"/>
<rect x="352" y="1436" width="199" height="92" rx="14" fill="#4a5259"/><rect x="352" y="1436" width="20" height="92" fill="#4a5259"/>
<path d="M352 222Q356 232 364 236V244H352z" fill="#333a42"/>
<g>
<text class="t" x="357" y="148" textLength="79" lengthAdjust="spacingAndGlyphs">Track 1</text>
<text class="t" x="357" y="268" textLength="79" lengthAdjust="spacingAndGlyphs">Track 3</text>
<text class="t" x="357" y="379" textLength="79" lengthAdjust="spacingAndGlyphs">Track 4</text>
<text class="t" x="357" y="490.700" textLength="79" lengthAdjust="spacingAndGlyphs">Track 5</text>
<text class="t" x="357" y="602.300" textLength="79" lengthAdjust="spacingAndGlyphs">Track 6</text>
<text class="t" x="357" y="714" textLength="78" lengthAdjust="spacingAndGlyphs">Track 7</text>
<text class="t" x="357" y="823" style="fill:#5e6970;stroke:none" textLength="68" lengthAdjust="spacingAndGlyphs">Track 8</text>
<text class="t" x="357" y="858" textLength="79" lengthAdjust="spacingAndGlyphs">Track 9</text>
<text class="t" x="356" y="970" textLength="94" lengthAdjust="spacingAndGlyphs">Track 10</text>
<text class="t" x="356" y="1082" textLength="94" lengthAdjust="spacingAndGlyphs">Track 11</text>
<text class="t" x="356" y="1184" textLength="94" lengthAdjust="spacingAndGlyphs">Track 12</text>
<text class="t" x="356" y="1236" textLength="94" lengthAdjust="spacingAndGlyphs">Track 13</text>
<text class="t" x="356" y="1348" textLength="94" lengthAdjust="spacingAndGlyphs">Track 14</text>
<text class="t" x="356" y="1460" style="fill:#d9dccd;stroke:#d9dccd" textLength="94" lengthAdjust="spacingAndGlyphs">Track 15</text>
<text class="t" x="356" y="1552" textLength="94" lengthAdjust="spacingAndGlyphs">Track 16</text>
</g>
<use href="#nt" x="449" y="197"/><path d="M489 212h18l-9 10z" fill="#fff"/><use href="#ld" x="530.600" y="216.700"/><use href="#dt" x="380" y="224"/>
<use href="#h" y="355"/><use href="#h" y="466.700"/><use href="#h" y="578.300"/><use href="#h" y="690"/><use href="#h" y="801"/><use href="#h" y="946"/><use href="#h" y="1058"/><use href="#h" y="1142"/><use href="#h" y="1324"/><use href="#h" y="1436"/>
<use href="#nt" x="485" y="1161"/><use href="#ld" x="530.600" y="1176"/><use href="#dt" x="380" y="1200"/>
<use href="#ld" x="530.600" y="1508"/><use href="#dt" x="380" y="1515"/>
<g clip-path="url(#t16)"><use href="#h" y="1638"/></g>
<path d="M487 826l5-18 1 2c2 3 4 5 4 9-1-3-3-4-4-5l-3 13q-1 2-4 2-3-1-2-3 1-2 3-1z" fill="#58626a"/>
<path d="M527 817v-4a5 5 0 0 1 10 0v4" fill="none" stroke="#5d6770" stroke-width="2.400"/><rect x="524" y="817" width="15" height="10" fill="#5d6770"/>

<!-- selector col -->
<rect x="555" y="125" width="16" height="108" rx="1.500" fill="none" stroke="#a5d24e" stroke-width="2"/>
<rect x="554" y="1143" width="18" height="68" fill="#b08cc9"/>

<!-- strip under track 1 -->
<g clip-path="url(#gc)">
<path fill="#171d25" d="M573.700 235.500H2248.900V244H573.700zM2416.400 235.500H2751.500V244H2416.400z"/>
<line x1="573.700" y1="240" x2="2248.900" y2="240" stroke="#6c4d76" stroke-width="6" stroke-dasharray="82 1.760"/>
<line x1="2416.400" y1="240" x2="2751.500" y2="240" stroke="#6c4d76" stroke-width="6" stroke-dasharray="82 1.760"/>

<g class="c" transform="translate(0,124)">
<use href="#c1" x="573.700"/><use href="#c1" x="741.200"/><use href="#c1" x="908.700"/><use href="#c1" x="1411.300"/><use href="#c1" x="1578.800"/><use href="#c1" x="1746.300"/><use href="#c1" x="2248.900"/><use href="#c1" x="2416.400"/><use href="#c1" x="2584"/>
<text x="600" y="21" textLength="138" lengthAdjust="spacingAndGlyphs">Beef 80..ralette</text>
<text x="767.500" y="21" textLength="138" lengthAdjust="spacingAndGlyphs">Beef 80..ralette</text>
<text x="935" y="21" textLength="138" lengthAdjust="spacingAndGlyphs">Beef 80..ralette</text>
<text x="1437.500" y="21" textLength="138" lengthAdjust="spacingAndGlyphs">Beef 80..ralette</text>
<text x="1605" y="21" textLength="138" lengthAdjust="spacingAndGlyphs">Beef 80..ralette</text>
<text x="1772.500" y="21" textLength="138" lengthAdjust="spacingAndGlyphs">Beef 80..ralette</text>
<text x="2275" y="21" textLength="138" lengthAdjust="spacingAndGlyphs">Beef 80..ralette</text>
<text x="2442.500" y="21" textLength="138" lengthAdjust="spacingAndGlyphs">Beef 80..ralette</text>
<text x="2610" y="21" textLength="138" lengthAdjust="spacingAndGlyphs">Beef 80..ralette</text>
</g>

<g class="c" transform="translate(0,244)">
<use href="#c3" x="741.200"/><use href="#c3" x="908.700"/><use href="#c3" x="1076.300"/><use href="#c3" x="1243.800"/><use href="#c3" x="1578.800"/><use href="#c3" x="1746.300"/><use href="#c3" x="1913.900"/><use href="#c3" x="2081.400"/><use href="#c3" x="2416.400"/><use href="#c3" x="2584"/>
<text x="767.500" y="21" textLength="138" lengthAdjust="spacingAndGlyphs">Beef 8..nd!2 #2</text>
<text x="935" y="21" textLength="138" lengthAdjust="spacingAndGlyphs">Beef 8..nd!2 #2</text>
<text x="1102.500" y="21" textLength="138" lengthAdjust="spacingAndGlyphs">Beef 8..nd!2 #2</text>
<text x="1270" y="21" textLength="138" lengthAdjust="spacingAndGlyphs">Beef 8..nd!2 #2</text>
<text x="1605" y="21" textLength="138" lengthAdjust="spacingAndGlyphs">Beef 8..nd!2 #2</text>
<text x="1772.500" y="21" textLength="138" lengthAdjust="spacingAndGlyphs">Beef 8..nd!2 #2</text>
<text x="1940" y="21" textLength="138" lengthAdjust="spacingAndGlyphs">Beef 8..nd!2 #2</text>
<text x="2107.500" y="21" textLength="138" lengthAdjust="spacingAndGlyphs">Beef 8..nd!2 #2</text>
<text x="2442.500" y="21" textLength="138" lengthAdjust="spacingAndGlyphs">Beef 8..nd!2 #2</text>
<text x="2610" y="21" textLength="138" lengthAdjust="spacingAndGlyphs">Beef 8..nd!2 #2</text>
</g>

<g class="c" transform="translate(0,355)">
<use href="#c4" x="741.200"/><use href="#c4" x="908.700"/><use href="#c4" x="1076.300"/><use href="#c4" x="1243.800"/><use href="#c4" x="1411.300"/><use href="#c4" x="1578.800"/><use href="#c4" x="1746.300"/><use href="#c4" x="1913.900"/><use href="#c4" x="2081.400"/><use href="#c4" x="2248.900"/><use href="#c4" x="2416.400"/><use href="#c4" x="2584"/>
<text x="767.500" y="21" textLength="132.500" lengthAdjust="spacingAndGlyphs">Zebralette #5</text>
<text x="935" y="21" textLength="132.500" lengthAdjust="spacingAndGlyphs">Zebralette #5</text>
<text x="1102.500" y="21" textLength="132.500" lengthAdjust="spacingAndGlyphs">Zebralette #5</text>
<text x="1270" y="21" textLength="132.500" lengthAdjust="spacingAndGlyphs">Zebralette #5</text>
<text x="1437.500" y="21" textLength="132.500" lengthAdjust="spacingAndGlyphs">Zebralette #5</text>
<text x="1605" y="21" textLength="132.500" lengthAdjust="spacingAndGlyphs">Zebralette #5</text>
<text x="1772.500" y="21" textLength="132.500" lengthAdjust="spacingAndGlyphs">Zebralette #5</text>
<text x="1940" y="21" textLength="132.500" lengthAdjust="spacingAndGlyphs">Zebralette #5</text>
<text x="2107.500" y="21" textLength="132.500" lengthAdjust="spacingAndGlyphs">Zebralette #5</text>
<text x="2275" y="21" textLength="132.500" lengthAdjust="spacingAndGlyphs">Zebralette #5</text>
<text x="2442.500" y="21" textLength="132.500" lengthAdjust="spacingAndGlyphs">Zebralette #5</text>
<text x="2610" y="21" textLength="132.500" lengthAdjust="spacingAndGlyphs">Zebralette #5</text>
</g>

<g class="c" transform="translate(0,466.700)">
<use href="#c5" x="1076.300"/><use href="#c5" x="1243.800"/><use href="#c5" x="1913.900"/><use href="#c5" x="2081.400"/>
<text x="1102.500" y="21" textLength="132.500" lengthAdjust="spacingAndGlyphs">Zebralette #4</text>
<text x="1270" y="21" textLength="132.500" lengthAdjust="spacingAndGlyphs">Zebralette #4</text>
<text x="1940" y="21" textLength="132.500" lengthAdjust="spacingAndGlyphs">Zebralette #4</text>
<text x="2107.500" y="21" textLength="132.500" lengthAdjust="spacingAndGlyphs">Zebralette #4</text>
</g>

<g class="c" transform="translate(0,578.300)">
<svg x="657.500" width="83.700" height="112"><use href="#c6"/></svg>
<use href="#c6" x="1076.300"/><use href="#c6" x="1243.800"/><use href="#c6" x="1411.300"/><use href="#c6" x="1913.900"/><use href="#c6" x="2081.400"/><use href="#c6" x="2248.900"/>
<text x="684" y="21" textLength="51" lengthAdjust="spacingAndGlyphs">B..#3</text>
<text x="1102.500" y="21" textLength="138" lengthAdjust="spacingAndGlyphs">Beef 8..nd!2 #3</text>
<text x="1270" y="21" textLength="138" lengthAdjust="spacingAndGlyphs">Beef 8..nd!2 #3</text>
<text x="1437.500" y="21" textLength="138" lengthAdjust="spacingAndGlyphs">Beef 8..nd!2 #3</text>
<text x="1940" y="21" textLength="138" lengthAdjust="spacingAndGlyphs">Beef 8..nd!2 #3</text>
<text x="2107.500" y="21" textLength="138" lengthAdjust="spacingAndGlyphs">Beef 8..nd!2 #3</text>
<text x="2275" y="21" textLength="138" lengthAdjust="spacingAndGlyphs">Beef 8..nd!2 #3</text>
</g>

<g class="c" transform="translate(0,690)">
<svg x="573.700" width="83.700" height="111"><use href="#c7a"/></svg>
<svg x="657.500" width="83.700" height="111"><use href="#c7a"/></svg>
<use href="#c7" x="1411.300"/><use href="#c7" x="2248.900"/>
<rect x="657" width="1" height="30" fill="#1a2228"/>
<text x="600" y="21" textLength="53" lengthAdjust="spacingAndGlyphs">Pat..7</text>
<text x="684" y="21" textLength="53" lengthAdjust="spacingAndGlyphs">Pat..7</text>
<text x="1437.500" y="21" textLength="102" lengthAdjust="spacingAndGlyphs">Pattern 16</text>
<text x="2275" y="21" textLength="102" lengthAdjust="spacingAndGlyphs">Pattern 16</text>
</g>

<g class="f" transform="translate(0,801)">
<path fill="#47535c" fill-opacity=".55" d="M741.200 1h335v32h-335zM1578.800 1h335v32h-335zM2416.400 1h335v32h-335z"/>
<path fill="none" stroke="#7f8c94" stroke-width="2.200" d="M744 8l14 17M758 8l-14 17M911.500 8l14 17M925.500 8l-14 17M1581.500 8l14 17M1595.500 8l-14 17M1749 8l14 17M1763 8l-14 17M2419 8l14 17M2433 8l-14 17M2586.500 8l14 17M2600.500 8l-14 17"/>
<text x="767" y="22" textLength="138" lengthAdjust="spacingAndGlyphs">FOREIGN..ck)_2</text>
<text x="934.500" y="22" textLength="138" lengthAdjust="spacingAndGlyphs">FOREIGN..ck)_2</text>
<text x="1604.500" y="22" textLength="138" lengthAdjust="spacingAndGlyphs">FOREIGN..ck)_2</text>
<text x="1772" y="22" textLength="138" lengthAdjust="spacingAndGlyphs">FOREIGN..ck)_2</text>
<text x="2442" y="22" textLength="138" lengthAdjust="spacingAndGlyphs">FOREIGN..ck)_2</text>
<text x="2609.500" y="22" textLength="138" lengthAdjust="spacingAndGlyphs">FOREIGN..ck)_2</text>
</g>

<g class="c" transform="translate(0,834)">
<use href="#c9" x="741.200"/><use href="#c9" x="908.700"/>
<svg x="1083.600" width="150.400" height="112"><use href="#c9"/></svg>
<svg x="1243.800" width="124.500" height="112"><use href="#c9"/></svg>
<use href="#c9" x="1578.800"/><use href="#c9" x="1746.300"/>
<svg x="1921" width="160.400" height="112"><use href="#c9"/></svg>
<svg x="2081.400" width="124.500" height="112"><use href="#c9"/></svg>
<use href="#c9" x="2416.400"/><use href="#c9" x="2584"/>
<text x="767.500" y="21" textLength="138" lengthAdjust="spacingAndGlyphs">Beef 8..er(808)</text>
<text x="935" y="21" textLength="138" lengthAdjust="spacingAndGlyphs">Beef 8..er(808)</text>
<text x="1110" y="21" textLength="120" lengthAdjust="spacingAndGlyphs">Beef 8..r(808)</text>
<text x="1270" y="21" textLength="97" lengthAdjust="spacingAndGlyphs">Beef..(808)</text>
<text x="1605" y="21" textLength="138" lengthAdjust="spacingAndGlyphs">Beef 8..er(808)</text>
<text x="1772.500" y="21" textLength="138" lengthAdjust="spacingAndGlyphs">Beef 8..er(808)</text>
<text x="1947.500" y="21" textLength="132" lengthAdjust="spacingAndGlyphs">Beef 8..er(808)</text>
<text x="2107.500" y="21" textLength="97" lengthAdjust="spacingAndGlyphs">Beef..(808)</text>
<text x="2442.500" y="21" textLength="138" lengthAdjust="spacingAndGlyphs">Beef 8..er(808)</text>
<text x="2610" y="21" textLength="138" lengthAdjust="spacingAndGlyphs">Beef 8..er(808)</text>
</g>

<g class="c" transform="translate(0,946)">
<use href="#c10" x="741.200"/><use href="#c10" x="908.700"/>
<svg x="1076.300" width="158" height="112"><use href="#c10"/></svg>
<svg x="1243.800" width="124.500" height="112"><use href="#c10"/></svg>
<use href="#c10" x="1578.800"/><use href="#c10" x="1746.300"/><use href="#c10" x="1913.900"/>
<svg x="2081.400" width="124.500" height="112"><use href="#c10"/></svg>
<use href="#c10" x="2416.400"/><use href="#c10" x="2584"/>
<text x="767.500" y="21" textLength="138" lengthAdjust="spacingAndGlyphs">Beef 80..ad 808</text>
<text x="935" y="21" textLength="138" lengthAdjust="spacingAndGlyphs">Beef 80..ad 808</text>
<text x="1102.500" y="21" textLength="129" lengthAdjust="spacingAndGlyphs">Beef 8..ad 808</text>
<text x="1270" y="21" textLength="95" lengthAdjust="spacingAndGlyphs">Beef..808</text>
<text x="1605" y="21" textLength="138" lengthAdjust="spacingAndGlyphs">Beef 80..ad 808</text>
<text x="1772.500" y="21" textLength="138" lengthAdjust="spacingAndGlyphs">Beef 80..ad 808</text>
<text x="1940" y="21" textLength="138" lengthAdjust="spacingAndGlyphs">Beef 80..ad 808</text>
<text x="2107.500" y="21" textLength="95" lengthAdjust="spacingAndGlyphs">Beef..808</text>
<text x="2442.500" y="21" textLength="138" lengthAdjust="spacingAndGlyphs">Beef 80..ad 808</text>
<text x="2610" y="21" textLength="138" lengthAdjust="spacingAndGlyphs">Beef 80..ad 808</text>
</g>

<g class="c" transform="translate(0,1058)">
<svg x="741.200" width="167.500" height="82"><use href="#c11"/></svg>
<svg x="908.700" width="167.500" height="82"><use href="#c11"/></svg>
<svg x="1076.300" width="158" height="82"><use href="#c11"/></svg>
<svg x="1243.800" width="124.500" height="82"><use href="#c11"/></svg>
<svg x="1495.100" width="70" height="82"><use href="#c11"/></svg>
<svg x="1578.800" width="167.500" height="82"><use href="#c11"/></svg>
<svg x="1746.300" width="167.500" height="82"><use href="#c11"/></svg>
<svg x="1913.900" width="167.500" height="82"><use href="#c11"/></svg>
<svg x="2416.400" width="167.500" height="82"><use href="#c11"/></svg>
<svg x="2584" width="167.500" height="82"><use href="#c11"/></svg>
<text x="767.500" y="21" textLength="136" lengthAdjust="spacingAndGlyphs">Clap [ Air ] #2</text>
<text x="935" y="21" textLength="136" lengthAdjust="spacingAndGlyphs">Clap [ Air ] #2</text>
<text x="1102.500" y="21" textLength="128" lengthAdjust="spacingAndGlyphs">Clap [ Air ] #2</text>
<text x="1270" y="21" textLength="95" lengthAdjust="spacingAndGlyphs">Clap..r ] #2</text>
<text x="1521" y="21" textLength="42" lengthAdjust="spacingAndGlyphs">Cl..2</text>
<text x="1605" y="21" textLength="136" lengthAdjust="spacingAndGlyphs">Clap [ Air ] #2</text>
<text x="1772.500" y="21" textLength="136" lengthAdjust="spacingAndGlyphs">Clap [ Air ] #2</text>
<text x="1940" y="21" textLength="136" lengthAdjust="spacingAndGlyphs">Clap [ Air ] #2</text>
<text x="2442.500" y="21" textLength="136" lengthAdjust="spacingAndGlyphs">Clap [ Air ] #2</text>
<text x="2610" y="21" textLength="136" lengthAdjust="spacingAndGlyphs">Clap [ Air ] #2</text>
</g>

<g class="c" transform="translate(0,1142)">
<use href="#c12" x="741.200"/><use href="#c12" x="908.700"/>
<svg x="1076.300" width="158" height="70"><use href="#c12"/></svg>
<svg x="1243.800" width="124.500" height="70"><use href="#c12"/></svg>
<use href="#c12" x="1578.800"/><use href="#c12" x="1746.300"/><use href="#c12" x="1913.900"/>
<svg x="2081.400" width="124.500" height="70"><use href="#c12"/></svg>
<use href="#c12" x="2416.400"/><use href="#c12" x="2584"/>
<text x="767.500" y="41" textLength="139" lengthAdjust="spacingAndGlyphs">@macs..shot</text>
<text x="935" y="41" textLength="139" lengthAdjust="spacingAndGlyphs">@macs..shot</text>
<text x="1102.500" y="41" textLength="129" lengthAdjust="spacingAndGlyphs">@macs..hot</text>
<text x="1270" y="41" textLength="97" lengthAdjust="spacingAndGlyphs">@mac..ot</text>
<text x="1605" y="41" textLength="139" lengthAdjust="spacingAndGlyphs">@macs..shot</text>
<text x="1772.500" y="41" textLength="139" lengthAdjust="spacingAndGlyphs">@macs..shot</text>
<text x="1940" y="41" textLength="139" lengthAdjust="spacingAndGlyphs">@macs..shot</text>
<text x="2107.500" y="41" textLength="97" lengthAdjust="spacingAndGlyphs">@mac..ot</text>
<text x="2442.500" y="41" textLength="139" lengthAdjust="spacingAndGlyphs">@macs..shot</text>
<text x="2610" y="41" textLength="139" lengthAdjust="spacingAndGlyphs">@macs..shot</text>
</g>

<g class="c" transform="translate(0,1212)">
<use href="#c13" x="741.200"/><use href="#c13" x="908.700"/>
<svg x="1076.300" width="158" height="112"><use href="#c13"/></svg>
<svg x="1243.800" width="124.500" height="112"><use href="#c13"/></svg>
<use href="#c13" x="1578.800"/><use href="#c13" x="1746.300"/><use href="#c13" x="1913.900"/>
<svg x="2081.400" width="124.500" height="112"><use href="#c13"/></svg>
<use href="#c13" x="2416.400"/><use href="#c13" x="2584"/>
<text x="767.500" y="20" textLength="61" lengthAdjust="spacingAndGlyphs">HH (5)</text>
<text x="935" y="20" textLength="61" lengthAdjust="spacingAndGlyphs">HH (5)</text>
<text x="1102.500" y="20" textLength="61" lengthAdjust="spacingAndGlyphs">HH (5)</text>
<text x="1270" y="20" textLength="61" lengthAdjust="spacingAndGlyphs">HH (5)</text>
<text x="1605" y="20" textLength="61" lengthAdjust="spacingAndGlyphs">HH (5)</text>
<text x="1772.500" y="20" textLength="61" lengthAdjust="spacingAndGlyphs">HH (5)</text>
<text x="1940" y="20" textLength="61" lengthAdjust="spacingAndGlyphs">HH (5)</text>
<text x="2107.500" y="20" textLength="61" lengthAdjust="spacingAndGlyphs">HH (5)</text>
<text x="2442.500" y="20" textLength="61" lengthAdjust="spacingAndGlyphs">HH (5)</text>
<text x="2610" y="20" textLength="61" lengthAdjust="spacingAndGlyphs">HH (5)</text>
</g>

<g class="c" transform="translate(0,1324)">
<use href="#c14" x="741.200"/><use href="#c14" x="908.700"/><use href="#c14" x="1578.800"/><use href="#c14" x="1746.300"/><use href="#c14" x="2416.400"/><use href="#c14" x="2584"/>
<text x="767.500" y="21" textLength="101.500" lengthAdjust="spacingAndGlyphs">Pattern 19</text>
<text x="935" y="21" textLength="101.500" lengthAdjust="spacingAndGlyphs">Pattern 19</text>
<text x="1605" y="21" textLength="101.500" lengthAdjust="spacingAndGlyphs">Pattern 19</text>
<text x="1772.500" y="21" textLength="101.500" lengthAdjust="spacingAndGlyphs">Pattern 19</text>
<text x="2442.500" y="21" textLength="101.500" lengthAdjust="spacingAndGlyphs">Pattern 19</text>
<text x="2610" y="21" textLength="101.500" lengthAdjust="spacingAndGlyphs">Pattern 19</text>
</g>

<g class="c" transform="translate(0,1436)">
<svg x="574" width="10.500" height="91"><use href="#au" x="-27"/></svg>
<use href="#au" x="589"/><use href="#au" x="631"/><use href="#au" x="673"/><svg x="715" width="26.500" height="91"><use href="#au"/></svg>
<use href="#sec" x="1411.300"/><use href="#sec" x="2248.900"/>
<rect x="2751.500" y="31" width="75" height="60" fill="#1e2d34" fill-opacity=".7"/>
<rect x="2751.500" width="75" height="31" fill="#4b4860"/>
<path d="M2755 9l7 7-7 7zM2771 9l-7 7 7 7z" fill="#fff"/><path d="M2755 16h16" stroke="#fff" stroke-width="2"/>
<text x="2778" y="20" textLength="43" lengthAdjust="spacingAndGlyphs">LT..2</text>
<path fill="#c2bdd3" d="M2751.500 61l6-10 5-5 6 2 5-4 3 3 6-3 6 3 5-2 8 1 6-1 7 3 6-2 6 3V76l-6 3-6-2-7 3-6-2-8 4-5-3-6 3-6-4-3 4-5-3-6 2-5-5z"/>
</g>

<svg x="2751.500" y="1528" width="75" height="96">
<rect x=".5" y="30" width="75" height="66" fill="#565069" fill-opacity=".8"/>
<rect x=".5" width="75" height="30.500" fill="url(#ch)"/><use href="#pi" x="3.500" y="7"/>
<path fill="#ef8a91" d="M27 33h13v2H27zM27 37.700h14v2H27zM25 45.300h16v2H25zM21 45.300h20v2H21zM64 45.300h11v2H64zM69 42h6v2h-6zM42 47h6v2h-6zM62 47h13v2H62zM15 49.700h35v2H15zM57 53h18v2H57zM0 58h18v2H0zM27 58h13v2H27zM50 58h25v2H50zM3 61.300h14v2H3zM5 64.700h33v2H5zM39 64.700h3v2h-3zM48 64.700h25v2H48zM0 69.700h23v2H0zM27 69.700h19v2H27zM50 69.700h10v2H50zM13 73h27v2H13zM54 73h21v2H54zM27 77.700h13v2H27zM60 77.700h4v2h-4zM0 84.700h25v2H0zM44 84.700h23v2H44zM10 93h32v2.500H10z"/>
<text x="26.500" y="21" font-size="21" fill="#f3eef6" textLength="45" lengthAdjust="spacingAndGlyphs">Pa..4</text>
</svg>
</g>

<!-- right scrollbar -->
<rect x="2827" y="84" width="41" height="1542" fill="#1f2a30"/>
<rect x="2828" y="84" width="38" height="1540" fill="url(#hat)"/>
<rect x="2828" y="84" width="38" height="37" fill="#4e585f" stroke="#5e6970" stroke-width="1.500"/><path d="M2839 106l8-8 8 8" fill="none" stroke="#c3ced4" stroke-width="2.200"/>
<rect x="2828" y="124" width="38" height="66" fill="#4e585f" stroke="#5e6970" stroke-width="1.500"/>
<rect x="2828" y="1586" width="38" height="37" fill="#4e585f" stroke="#5e6970" stroke-width="1.500"/><path d="M2839 1600l8 8 8-8" fill="none" stroke="#c3ced4" stroke-width="2.200"/>
<!-- bottom -->
<rect x="350" y="1624" width="2518" height="3" fill="#1f2a30"/>
<rect x="350" y="1627" width="2530" height="11" fill="#40484f"/>
<path d="M2868 1638l12-12v12z" fill="#2e373d"/>
<rect x="2868" y="42" width="12" height="1596" fill="#40484f"/>
<rect x="350" y="122" width="2" height="1503" fill="#1f2a30"/>
</svg>
</body></html>
